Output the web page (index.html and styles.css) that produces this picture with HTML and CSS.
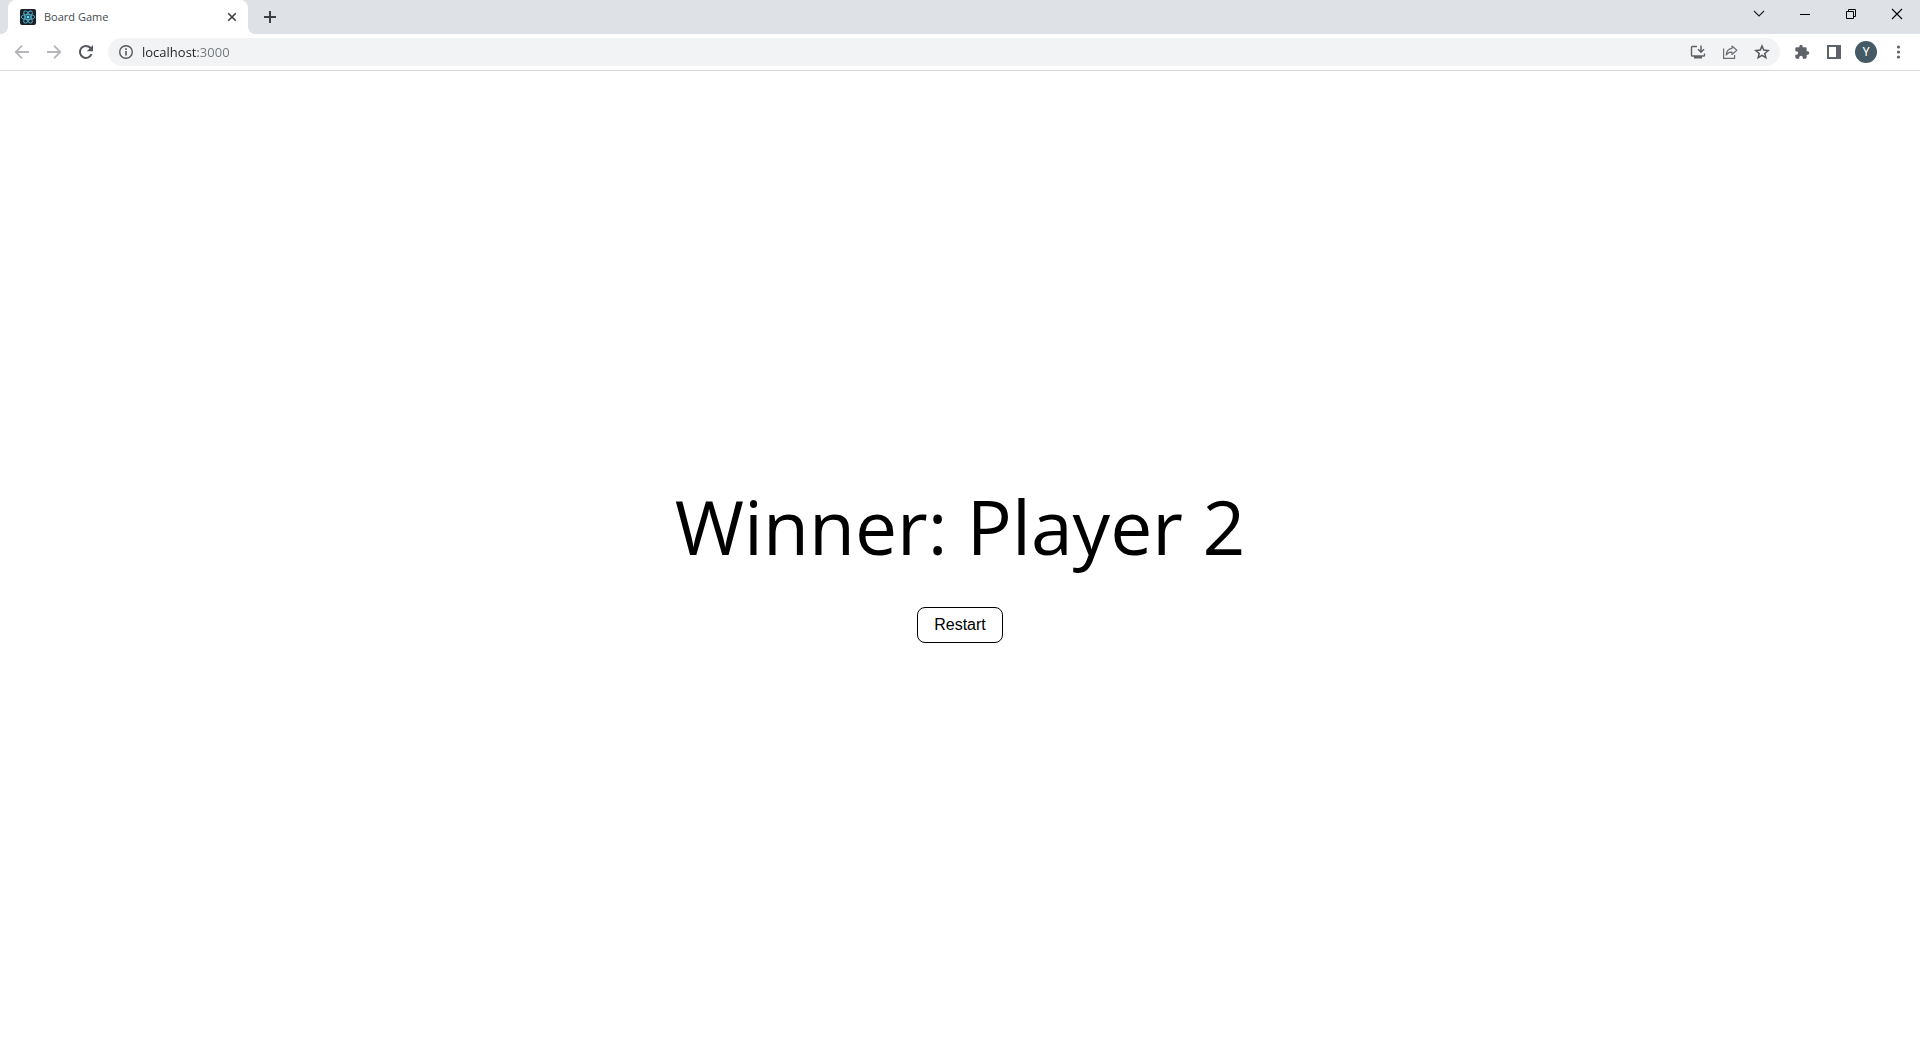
FILE: index.html
```html
<!DOCTYPE html>
<html lang="en">
<head>
<meta charset="utf-8">
<title>Board Game</title>
<link rel="stylesheet" href="styles.css">
</head>
<body>
<header class="browser">
  <div class="tab-strip">
    <div class="tab">
      <svg class="favicon" viewBox="0 0 16 16" width="16" height="16" aria-hidden="true">
        <rect width="16" height="16" rx="2" fill="#1c2127"/>
        <g fill="none" stroke="#4fb4d0" stroke-width=".9">
          <ellipse cx="8" cy="8" rx="6.8" ry="2.6"/>
          <ellipse cx="8" cy="8" rx="6.8" ry="2.6" transform="rotate(60 8 8)"/>
          <ellipse cx="8" cy="8" rx="6.8" ry="2.6" transform="rotate(120 8 8)"/>
        </g>
        <circle cx="8" cy="8" r="1.5" fill="#61dafb"/>
      </svg>
      <span class="tab-title">Board Game</span>
      <button class="tab-close" aria-label="Close tab"><svg viewBox="0 0 16 16" width="16" height="16"><path d="M4.2 4.2l7.6 7.6M11.8 4.2l-7.6 7.6" stroke="#3c4043" stroke-width="1.6" fill="none"/></svg></button>
    </div>
    <button class="new-tab" aria-label="New tab"><svg viewBox="0 0 16 16" width="16" height="16"><path d="M8 2v12M2 8h12" stroke="#3c4043" stroke-width="2" fill="none"/></svg></button>
    <div class="window-controls">
      <button class="window-button" aria-label="Search tabs"><svg viewBox="0 0 12 12" width="12" height="12"><path d="M1 3l5 5 5-5" stroke="#222" stroke-width="1.1" fill="none"/></svg></button>
      <button class="window-button" aria-label="Minimize"><svg viewBox="0 0 12 12" width="12" height="12"><path d="M1 6.5h10" stroke="#000" fill="none"/></svg></button>
      <button class="window-button" aria-label="Restore"><svg viewBox="0 0 12 12" width="12" height="12"><path d="M1.5 3.5h7v7h-7zM3.5 3.5v-2h7v7h-2" stroke="#000" fill="none"/></svg></button>
      <button class="window-button" aria-label="Close"><svg viewBox="0 0 12 12" width="12" height="12"><path d="M1 1l10 10M11 1L1 11" stroke="#000" stroke-width="1.1" fill="none"/></svg></button>
    </div>
  </div>
  <div class="toolbar">
    <button class="tool" aria-label="Back"><svg viewBox="0 0 16 16" width="16" height="16"><path d="M15 8H2M8 1.7L1.7 8 8 14.3" stroke="#b4b6b9" stroke-width="1.8" fill="none"/></svg></button>
    <button class="tool" aria-label="Forward"><svg viewBox="0 0 16 16" width="16" height="16"><path d="M1 8h13M8 1.7L14.3 8 8 14.3" stroke="#b4b6b9" stroke-width="1.8" fill="none"/></svg></button>
    <button class="tool" aria-label="Reload"><svg viewBox="0 0 16 16" width="16" height="16"><path d="M13.5 10.2A6 6 0 1 1 12.3 3.8L13.5 5" stroke="#55585c" stroke-width="2" fill="none"/><path d="M15 1v6.2H8.8z" fill="#55585c"/></svg></button>
    <div class="omnibox">
      <button class="tool" aria-label="Site information"><svg viewBox="0 0 16 16" width="16" height="16"><circle cx="8" cy="8" r="6.3" stroke="#55585c" stroke-width="1.4" fill="none"/><path d="M8 7v4.5M8 4.3V6" stroke="#55585c" stroke-width="1.6"/></svg></button>
      <input class="address" type="text" value="localhost:3000" aria-label="Address" spellcheck="false">
      <button class="tool" aria-label="Install app"><svg viewBox="0 0 16 16" width="16" height="16"><path d="M7 2.5H2.3a.8.8 0 0 0-.8.8v7.9a.8.8 0 0 0 .8.8h11.4a.8.8 0 0 0 .8-.8V9.5" stroke="#5f6368" stroke-width="1.4" fill="none"/><path d="M4 12h8v2.5H4z" fill="#5f6368"/><path d="M11 1.5v6.5M8 5.2l3 3 3-3" stroke="#5f6368" stroke-width="1.5" fill="none"/></svg></button>
      <button class="tool" aria-label="Share"><svg viewBox="0 0 16 16" width="16" height="16"><path d="M1.6 4.5v9.8h11V11" stroke="#6c6f73" stroke-width="1.2" fill="none"/><path d="M10 2l4.8 4.3L10 10.5V8.2C7 8 5.4 9 4.2 11 4.4 7.3 6.3 4.8 10 4.3z" stroke="#6c6f73" stroke-width="1.2" stroke-linejoin="round" fill="none"/></svg></button>
      <button class="tool" aria-label="Bookmark this tab"><svg viewBox="0 0 16 16" width="16" height="16"><path d="M8 2l1.7 4.1 4.5.4-3.4 2.9 1 4.3L8 11.4l-3.8 2.3 1-4.3L1.8 6.5l4.5-.4z" stroke="#55585c" stroke-width="1.5" fill="none"/></svg></button>
    </div>
    <button class="tool" aria-label="Extensions"><svg viewBox="0 0 24 24" width="16" height="16"><path d="M20.5 11H19V7a2 2 0 0 0-2-2h-4V3.5a2.5 2.5 0 0 0-5 0V5H4a2 2 0 0 0-2 2v3.8h1.5a2.7 2.7 0 0 1 0 5.4H2V20a2 2 0 0 0 2 2h3.8v-1.5a2.7 2.7 0 0 1 5.4 0V22H17a2 2 0 0 0 2-2v-4h1.5a2.5 2.5 0 0 0 0-5z" fill="#5f6368"/></svg></button>
    <button class="tool" aria-label="Side panel"><svg viewBox="0 0 16 16" width="16" height="16"><path d="M1 1h14v14H1zM3 3v10h7V3z" fill="#5f6368" fill-rule="evenodd"/></svg></button>
    <button class="tool" aria-label="Profile"><span class="avatar">Y</span></button>
    <button class="tool" aria-label="Menu"><svg viewBox="0 0 16 16" width="16" height="16"><g fill="#5f6368"><circle cx="8.5" cy="3" r="1.6"/><circle cx="8.5" cy="8" r="1.6"/><circle cx="8.5" cy="13" r="1.6"/></g></svg></button>
  </div>
</header>
<main class="result">
  <h1 class="winner">Winner: Player 2</h1>
  <button class="restart">Restart</button>
</main>
</body>
</html>
```
FILE: styles.css
```css
* {
  box-sizing: border-box;
}

body {
  margin: 0;
  min-height: 100vh;
  display: flex;
  flex-direction: column;
  background: #fff;
  color: #000;
  font-family: "Open Sans", "Noto Sans", sans-serif;
}

button {
  margin: 0;
  padding: 0;
  border: 0;
  background: none;
  font: inherit;
  color: inherit;
}

svg {
  display: block;
}

.browser {
  border-bottom: 1px solid #d6d8da;
}

.tab-strip {
  display: flex;
  height: 34px;
  padding-left: 8px;
  background: #dee1e6;
}

.tab {
  position: relative;
  display: flex;
  align-items: center;
  gap: 8px;
  width: 240px;
  padding: 0 8px 0 12px;
  border-radius: 8px 8px 0 0;
  background: #fff;
}

/* flared feet of the active tab */
.tab::before,
.tab::after {
  content: "";
  position: absolute;
  bottom: 0;
  width: 8px;
  height: 8px;
}

.tab::before {
  left: -8px;
  background: radial-gradient(circle at 0 0, #dee1e6 8px, #fff 8px);
}

.tab::after {
  right: -8px;
  background: radial-gradient(circle at 100% 0, #dee1e6 8px, #fff 8px);
}

.tab-title {
  flex: 1;
  font-size: 11px;
  line-height: 16px;
  color: #45494d;
}

.tab-close,
.tool,
.new-tab,
.window-button {
  display: flex;
  align-items: center;
  justify-content: center;
}

.new-tab {
  width: 28px;
  margin-left: 8px;
}

.window-controls {
  display: flex;
  height: 28px;
  margin-left: auto;
}

.window-button {
  width: 46px;
}

.toolbar {
  display: flex;
  align-items: center;
  height: 36px;
  padding: 0 6px;
}

.tool {
  flex: none;
  width: 32px;
  height: 28px;
}

.omnibox {
  flex: 1;
  display: flex;
  align-items: center;
  height: 28px;
  margin: 0 6px;
  padding: 0 2px;
  border-radius: 14px;
  background: #f1f3f4;
}

.address {
  flex: 1;
  min-width: 0;
  padding: 0;
  border: 0;
  outline: 0;
  font: 13px/20px "Open Sans", "Noto Sans", sans-serif;
  color: #202124;
  /* host is dark, port is grey */
  background: linear-gradient(90deg, #202124 56px, #72767a 56px);
  -webkit-background-clip: text;
  background-clip: text;
  -webkit-text-fill-color: transparent;
}

.avatar {
  width: 22px;
  height: 22px;
  border-radius: 50%;
  background: #455a64;
  color: #fff;
  font: 12px/22px Roboto, sans-serif;
  text-align: center;
}

.result {
  flex: 1;
  display: flex;
  flex-direction: column;
  align-items: center;
  justify-content: center;
}

.winner {
  margin: 0 0 24px;
  font-size: 75px;
  line-height: 114px;
  font-weight: 400;
}

.restart {
  padding: 8px 16px;
  border: 1px solid #000;
  border-radius: 8px;
  background: #fff;
  font: 16px/18px "Liberation Sans", Arial, sans-serif;
}
```
